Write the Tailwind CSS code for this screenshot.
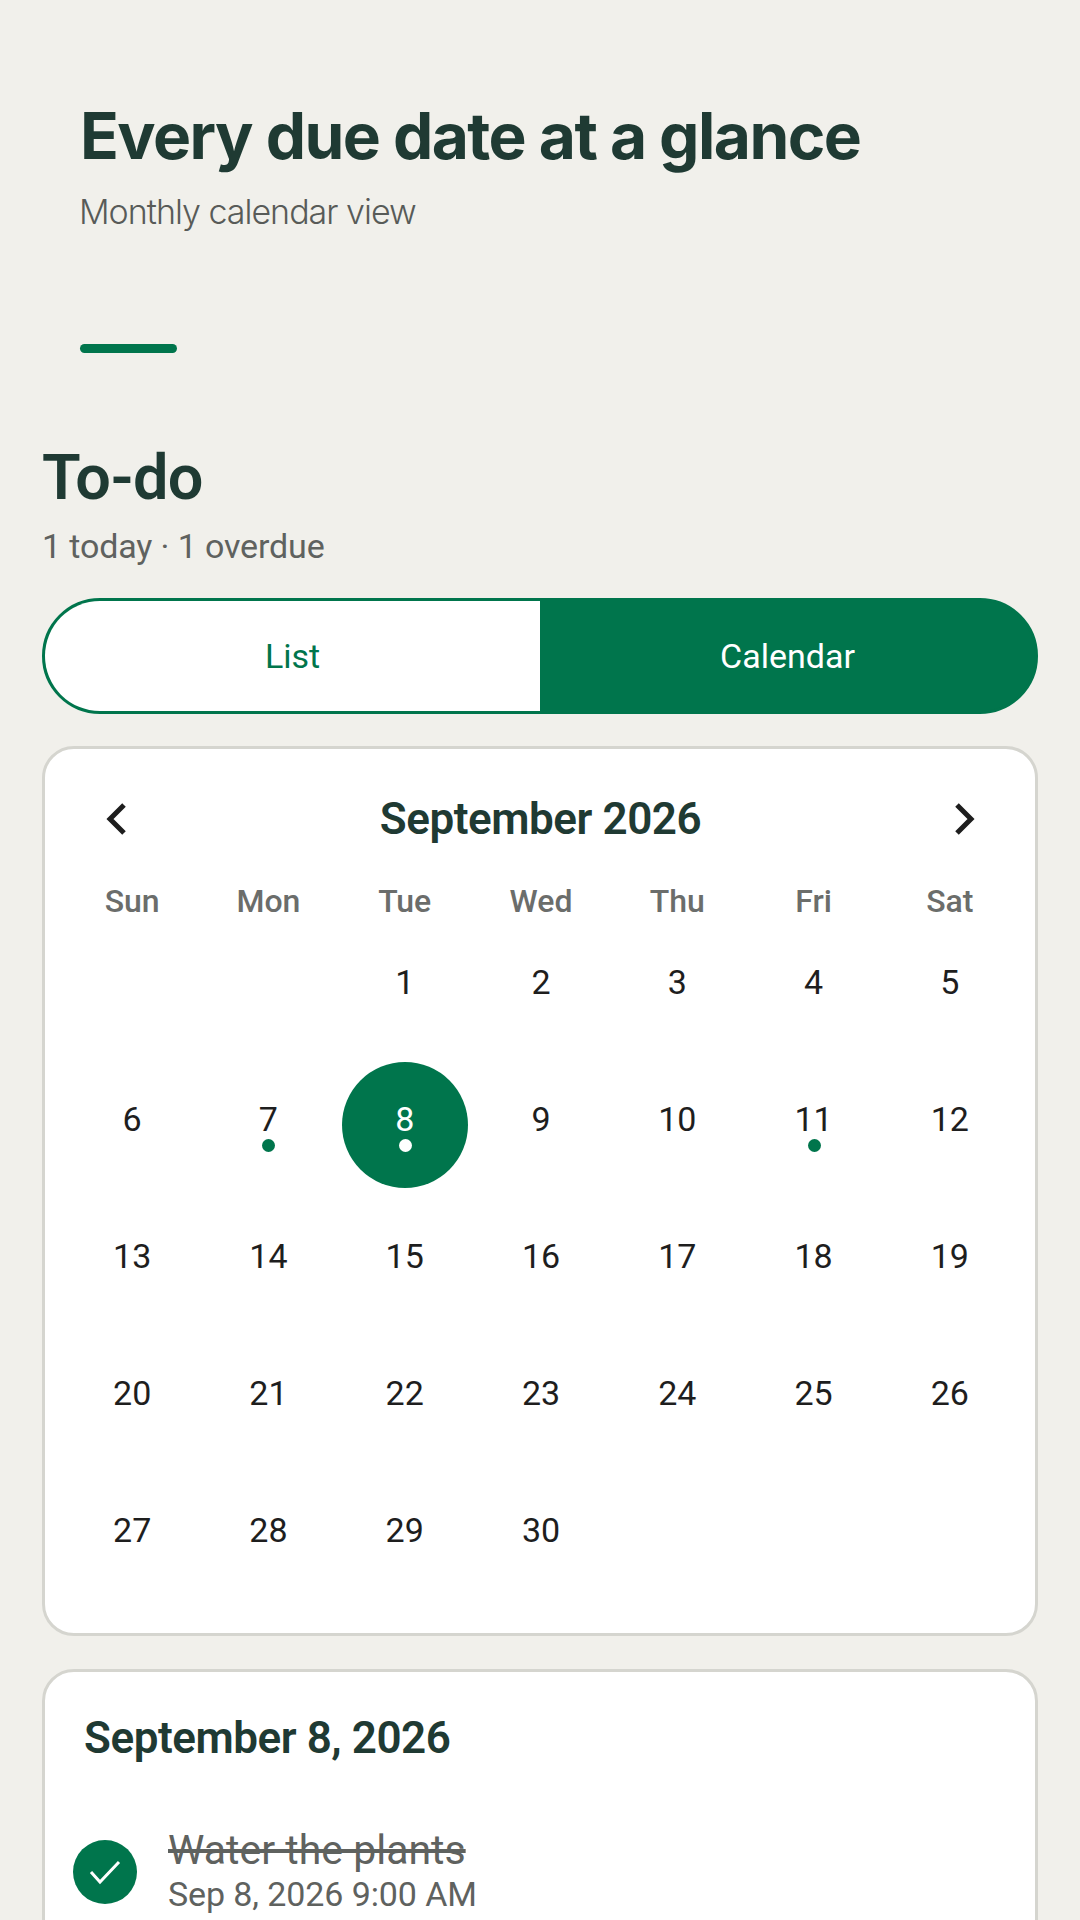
<!DOCTYPE html>
<html lang="en">
  <head>
    <meta charset="UTF-8" />
    <meta name="viewport" content="width=device-width, initial-scale=1.0" />
    <title>Every due date at a glance</title>
    <script src="https://cdn.jsdelivr.net/npm/@tailwindcss/browser@4"></script>
  </head>
  <body class="bg-[#f1f0eb]">
    <div class="h-[1920px] overflow-hidden font-['Roboto',sans-serif]">
      <!-- Hero -->
      <div class="px-20 pt-[100px] font-['Inter',sans-serif]">
        <h1 class="text-[64px] leading-[72px] font-bold tracking-[-1.55px] text-[#1f3a33]">Every due date at a glance</h1>
        <p class="mt-[18px] -ml-px text-[34px] leading-[44px] font-light tracking-[-1px] text-[#585b58]">Monthly calendar view</p>
        <div class="mt-[110px] w-[97px] h-[9px] rounded-full bg-[#00754c]"></div>
      </div>

      <div class="px-[42px] pt-[93px]">
        <!-- Title -->
        <h2 class="text-[63px] leading-[64px] font-semibold tracking-[-0.6px] text-[#1f3a33]">To-do</h2>
        <p class="mt-[14px] text-[34px] leading-[44px] tracking-[-0.13px] text-[#5f625f]">1 today · 1 overdue</p>

        <!-- Toggle -->
        <div class="mt-[30px] flex h-[116px] rounded-full border-[3px] border-[#00754c] bg-[#00754c] overflow-hidden text-[34px]">
          <button class="flex-1 bg-white text-[#00754c]">List</button>
          <button class="flex-1 bg-[#00754c] text-white">Calendar</button>
        </div>

        <!-- Calendar card -->
        <div class="mt-[32px] h-[890px] rounded-[32px] border-[3px] border-[#d5d5cf] bg-white pl-[19px] pr-[17px] pt-[38px]">
          <div class="flex items-center justify-between px-[40px] h-[64px]">
            <svg class="w-[26px] h-[34px] -ml-px" viewBox="0 0 26 34" fill="none" stroke="#1e1e1e" stroke-width="5"><path d="M21 3 7 17l14 14" /></svg>
            <h3 class="text-[44px] font-semibold tracking-[-0.45px] text-[#1f3a33]">September 2026</h3>
            <svg class="w-[26px] h-[34px]" viewBox="0 0 26 34" fill="none" stroke="#1e1e1e" stroke-width="5"><path d="M5 3l14 14L5 31" /></svg>
          </div>

          <div class="grid grid-cols-7 mt-[32px] text-center text-[32px] leading-[36px] font-medium text-[#6b6d6b]">
            <div>Sun</div><div>Mon</div><div>Tue</div><div>Wed</div><div>Thu</div><div>Fri</div><div>Sat</div>
          </div>

          <div class="grid grid-cols-7 auto-rows-[137px] text-[34px] leading-[40px] text-[#1e1e1e]">
            <div></div><div></div>
            <div class="flex items-center justify-center pb-3">1</div>
            <div class="flex items-center justify-center pb-3">2</div>
            <div class="flex items-center justify-center pb-3">3</div>
            <div class="flex items-center justify-center pb-3">4</div>
            <div class="flex items-center justify-center pb-3">5</div>

            <div class="flex items-center justify-center pb-3">6</div>
            <div class="relative flex items-center justify-center pb-3">7<span class="absolute left-1/2 top-[83px] -ml-[6px] w-[13px] h-[13px] rounded-full bg-[#00754c]"></span></div>
            <div class="relative flex items-center justify-center">
              <div class="relative flex items-center justify-center w-[126px] h-[126px] rounded-full bg-[#00754c] text-white pb-3">8<span class="absolute left-1/2 top-[77px] -ml-[6px] w-[13px] h-[13px] rounded-full bg-white"></span></div>
            </div>
            <div class="flex items-center justify-center pb-3">9</div>
            <div class="flex items-center justify-center pb-3">10</div>
            <div class="relative flex items-center justify-center pb-3">11<span class="absolute left-1/2 top-[83px] -ml-[6px] w-[13px] h-[13px] rounded-full bg-[#00754c]"></span></div>
            <div class="flex items-center justify-center pb-3">12</div>

            <div class="flex items-center justify-center pb-3">13</div>
            <div class="flex items-center justify-center pb-3">14</div>
            <div class="flex items-center justify-center pb-3">15</div>
            <div class="flex items-center justify-center pb-3">16</div>
            <div class="flex items-center justify-center pb-3">17</div>
            <div class="flex items-center justify-center pb-3">18</div>
            <div class="flex items-center justify-center pb-3">19</div>

            <div class="flex items-center justify-center pb-3">20</div>
            <div class="flex items-center justify-center pb-3">21</div>
            <div class="flex items-center justify-center pb-3">22</div>
            <div class="flex items-center justify-center pb-3">23</div>
            <div class="flex items-center justify-center pb-3">24</div>
            <div class="flex items-center justify-center pb-3">25</div>
            <div class="flex items-center justify-center pb-3">26</div>

            <div class="flex items-center justify-center pb-3">27</div>
            <div class="flex items-center justify-center pb-3">28</div>
            <div class="flex items-center justify-center pb-3">29</div>
            <div class="flex items-center justify-center pb-3">30</div>
          </div>
        </div>

        <!-- Selected day card -->
        <div class="mt-[33px] h-[400px] rounded-[32px] border-[3px] border-[#d5d5cf] bg-white px-[39px] pt-[39px]">
          <h3 class="text-[44px] leading-[54px] font-semibold tracking-[-0.45px] text-[#1f3a33]">September 8, 2026</h3>
          <div class="mt-[62px] -ml-[11px] flex items-center gap-[31px]">
            <div class="flex items-center justify-center w-[64px] h-[64px] mt-[2px] rounded-full bg-[#00754c]">
              <svg class="w-[32px] h-[26px]" viewBox="0 0 32 26" fill="none" stroke="#fff" stroke-width="3"><path d="M2 13l9 10L30 3" /></svg>
            </div>
            <div>
              <p class="text-[41px] leading-[47px] line-through text-[#5f625f]">Water the plants</p>
              <p class="text-[34px] leading-[40px] tracking-[-0.1px] text-[#5f625f]">Sep 8, 2026 9:00 AM</p>
            </div>
          </div>
        </div>
      </div>
    </div>
  </body>
</html>
